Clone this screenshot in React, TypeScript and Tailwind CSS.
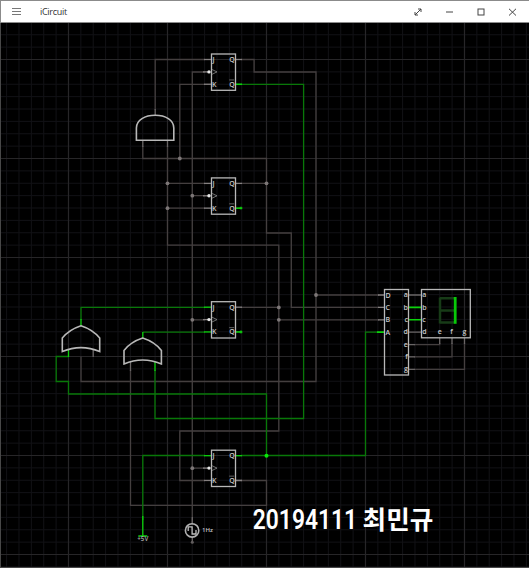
const W = "#443f3f";
const L = "#858080";
const G = "#087808";
const B = "#0bd20b";
const S = "#b8b8b8";

const minorX = Array.from({ length: 44 }, (_, i) => 6.6 + i * 12.375);
const minorY = Array.from({ length: 44 }, (_, i) => 34.75 + i * 12.375);
const majorX = [68.5, 167.5, 266.5, 365.5, 464.5];
const majorY = [59.5, 158.5, 257.5, 356.5, 455.5, 554.5];

const wires = [
  "M155.2 110V59.5H205",
  "M205 72H192.3V525",
  "M205 84.3H179.8V158.5",
  "M241 59.5H254.1V72H316V381.5H81V356.5",
  "M316 295H379",
  "M142.8 146V158.5H266.5V233H291.3V307.4H379",
  "M167.5 146V245.2H278.8V431H179.8V480.5H205",
  "M167.5 183.3H205M167.5 208.2H205M192.3 195.7H205M241 183.3H266.5",
  "M192.3 319.8H205M241 307.4H278.8M278.8 319.8H379",
  "M192.3 468.2H205M241 480.5H266.5V505.3H130.5V370",
  "M414 344.6H439.7V343M414 356.9H452V343M414 369.3H464.5V343",
];
const greens = [
  "M241 84.3H303.6V418.5H155V370",
  "M81 320V307.4H205",
  "M142.8 332.1H205",
  "M68.5 356.5H56.2V381.5H68.5V394H266.5V455.5",
  "M142.8 520V455.5H205",
  "M241 455.5H365.5V332.1H379",
];
const dots: [number, number][] = [
  [179.8, 158.5], [167.5, 183.3], [167.5, 208.2], [192.3, 195.7], [266.5, 183.3],
  [192.3, 319.8], [278.8, 307.4], [278.8, 319.8], [316, 295], [192.3, 468.2],
];

function T({ x, y, c, end }: { x: number; y: number; c: string; end?: boolean }) {
  return (
    <text x={x} y={y + 2.5} textAnchor={end ? "end" : "start"} fontSize="7" fontWeight="600" fill="#c8c8c8">
      {c}
    </text>
  );
}

function FlipFlop({ y, j = L, k = L, q = L, nq = L }: { y: number; j?: string; k?: string; q?: string; nq?: string }) {
  const y3 = y + 24.75;
  return (
    <g strokeWidth="1.3" fill="none">
      <path d={`M204 ${y}h7`} stroke={j} />
      <path d={`M204 ${y3}h7`} stroke={k} />
      <path d={`M236 ${y}h6`} stroke={q} />
      <path d={`M236 ${y3}h6`} stroke={nq} strokeWidth="1.6" />
      <path d={`M203 ${y + 12.4}h6`} stroke={L} />
      <rect x="211.5" y={y - 5.5} width="24" height="36.3" stroke={S} />
      <circle cx="209" cy={y + 12.4} r="1.7" fill="#e8e8e8" />
      <path d={`M212 ${y + 10}l5 2.4l-5 2.4`} stroke="#8c8c8c" strokeWidth="0.8" />
      <path d={`M229.2 ${y3 - 4.3}h5`} stroke="#8c8c8c" strokeWidth="0.7" />
      <T x={212.5} y={y} c="J" />
      <T x={212} y={y3} c="K" />
      <T x={234.8} y={y} c="Q" end />
      <T x={234.8} y={y3} c="Q" end />
    </g>
  );
}

function OrGate({ x, y }: { x: number; y: number }) {
  return (
    <path
      transform={`translate(${x} ${y})`}
      d="M0 0C-8 2.6 -14 6.5 -18.7 12.3V25.8Q0 18 18.7 25.8V12.3C14 6.5 8 2.6 0 0Z"
      fill="none"
      stroke={S}
      strokeWidth="1.6"
    />
  );
}

function Circuit() {
  return (
    <svg
      className="block h-[545px] w-full font-['Open_Sans','Noto_Sans',sans-serif]"
      viewBox="0 23 529 545"
    >
      <rect y="23" width="529" height="545" fill="#000" />
      <g stroke="#121216" strokeWidth="1">
        {minorX.map((x) => <path key={x} d={`M${x} 23V568`} />)}
        {minorY.map((y) => <path key={y} d={`M0 ${y}H529`} />)}
      </g>
      <g stroke="#272628" strokeWidth="1.2">
        {majorX.map((x) => <path key={x} d={`M${x} 23V568`} />)}
        {majorY.map((y) => <path key={y} d={`M0 ${y}H529`} />)}
      </g>
      <path d="M.5 23V568M0 567.5H529" stroke="#484848" />
      <g fill="none" strokeWidth="1.3">
        {wires.map((d) => <path key={d} d={d} stroke={W} />)}
        {greens.map((d) => <path key={d} d={d} stroke={G} />)}
        <path d="M155.2 115v-6M142.8 140v7M167.5 140v7M93.2 349v8M130.5 362v9M192.3 517v7M192.3 537v6" stroke="#686464" />
        <path d="M81 326v-7M68.5 350v7M142.8 338v-6M155 362v9M142.8 516V536M138.3 536h9" stroke={B} />
        <path d="M378 295h6M378 307.4h6M378 319.8h6" stroke={L} />
        <path d="M377 332.1h7M408 307.4h13M408 319.8h13" stroke={B} strokeWidth="1.6" />
        <path d="M408 295h13M408 332.1h13M408 344.6h7M408 356.9h7M408 369.3h7M439.7 338v6M452 338v6M464.5 338v6" stroke="#696565" />
      </g>
      {dots.map(([x, y]) => <circle key={`${x}-${y}`} cx={x} cy={y} r="1.9" fill="#7d7777" />)}
      <circle cx="266.5" cy="455.8" r="2" fill="#08e808" />
      <circle cx="241" cy="208" r="1.6" fill="#118411" />
      <circle cx="241" cy="331.9" r="1.6" fill="#118411" />
      <circle cx="192.3" cy="542.3" r="1.5" fill="#625e5e" />

      <FlipFlop y={59.5} nq={B} />
      <FlipFlop y={183.4} nq={B} />
      <FlipFlop y={307.2} j={B} k={B} nq={B} />
      <FlipFlop y={455.7} j={B} q={B} />

      <path d="M136.4 140.2V128C136.4 120 145 115.3 155.2 115.3S173.8 120 173.8 128V140.2Z" fill="none" stroke={S} strokeWidth="1.6" />
      <OrGate x={81} y={325.7} />
      <OrGate x={142.7} y={338.1} />

      <g fill="none" stroke={S} strokeWidth="1.3">
        <rect x="384.5" y="289.5" width="24" height="85.5" />
        <rect x="421.5" y="289.5" width="48.8" height="48.3" />
      </g>
      {["D", "C", "B", "A"].map((c, i) => <T key={c} x={385.4} y={295.1 + i * 12.375} c={c} />)}
      {["a", "b", "c", "d", "e", "f", "g"].map((c, i) => (
        <T key={c} x={407.9} y={294.7 + i * 12.375} c={c} end />
      ))}
      {["a", "b", "c", "d"].map((c, i) => <T key={c} x={422.3} y={294.7 + i * 12.375} c={c} />)}
      {["e", "f", "g"].map((c, i) => <T key={c} x={437.8 + i * 12.375} y={331.9} c={c} />)}
      <path d="M440 297.5V323.5M440 298.3H454M440 310.4H454M440 322.6H454" stroke="#173b17" strokeWidth="2.5" />
      <path d="M455.2 297V323.8" stroke="#08c908" strokeWidth="2.8" />

      <circle cx="192.1" cy="530.4" r="6.7" fill="none" stroke="#b0b0b0" strokeWidth="1.6" />
      <path d="M188.2 531V526.8H192.1V534H196V530" fill="none" stroke="#c0c0c0" strokeWidth="1.3" />
      <text x="202" y="532.4" fontSize="6" fontWeight="600" fill="#c4c4c4">1Hz</text>
      <text x="142.8" y="541" textAnchor="middle" fontSize="6.2" fontWeight="600" fill="#aaa">+5V</text>

      <g fill="#fff">
        <text className="font-['Roboto',sans-serif] font-semibold" fontSize="27" transform="translate(252.8 529) scale(.845 1)">
          20194111
        </text>
        <text className="font-['Noto_Sans_CJK_KR',sans-serif] font-bold" fontSize="25.5" transform="translate(362.6 528.7) scale(1.005 1)">
          최민규
        </text>
      </g>
    </svg>
  );
}

export default function App() {
  return (
    <div className="flex h-[568px] w-[529px] flex-col overflow-hidden bg-black">
      <header className="flex h-[23px] shrink-0 items-center border-y border-l border-[#8b8b8b] bg-white">
        <svg className="ml-[11px] h-3 w-[10px]" viewBox="0 0 10 12" stroke="#777" strokeWidth="1">
          <path d="M0 2.5h9M0 5.5h9M0 8.5h9" />
        </svg>
        <h1 className="ml-[18px] font-['Open_Sans',sans-serif] text-[9px] leading-none tracking-[-0.3px] text-[#333]">iCircuit</h1>
        <svg className="ml-auto h-[12px] w-[116px]" viewBox="413 5.5 116 12" fill="none" stroke="#444" strokeWidth="1">
          <path d="M415 14.5L421 8.5M418 8.5H421V11.5M415 11.5V14.5H418" />
          <path d="M446 11.5H453" />
          <rect x="478" y="8.5" width="6" height="6" />
          <path d="M509 8.3L516 15M516 8.3L509 15" />
        </svg>
      </header>
      <main className="flex-1">
        <Circuit />
      </main>
    </div>
  );
}
